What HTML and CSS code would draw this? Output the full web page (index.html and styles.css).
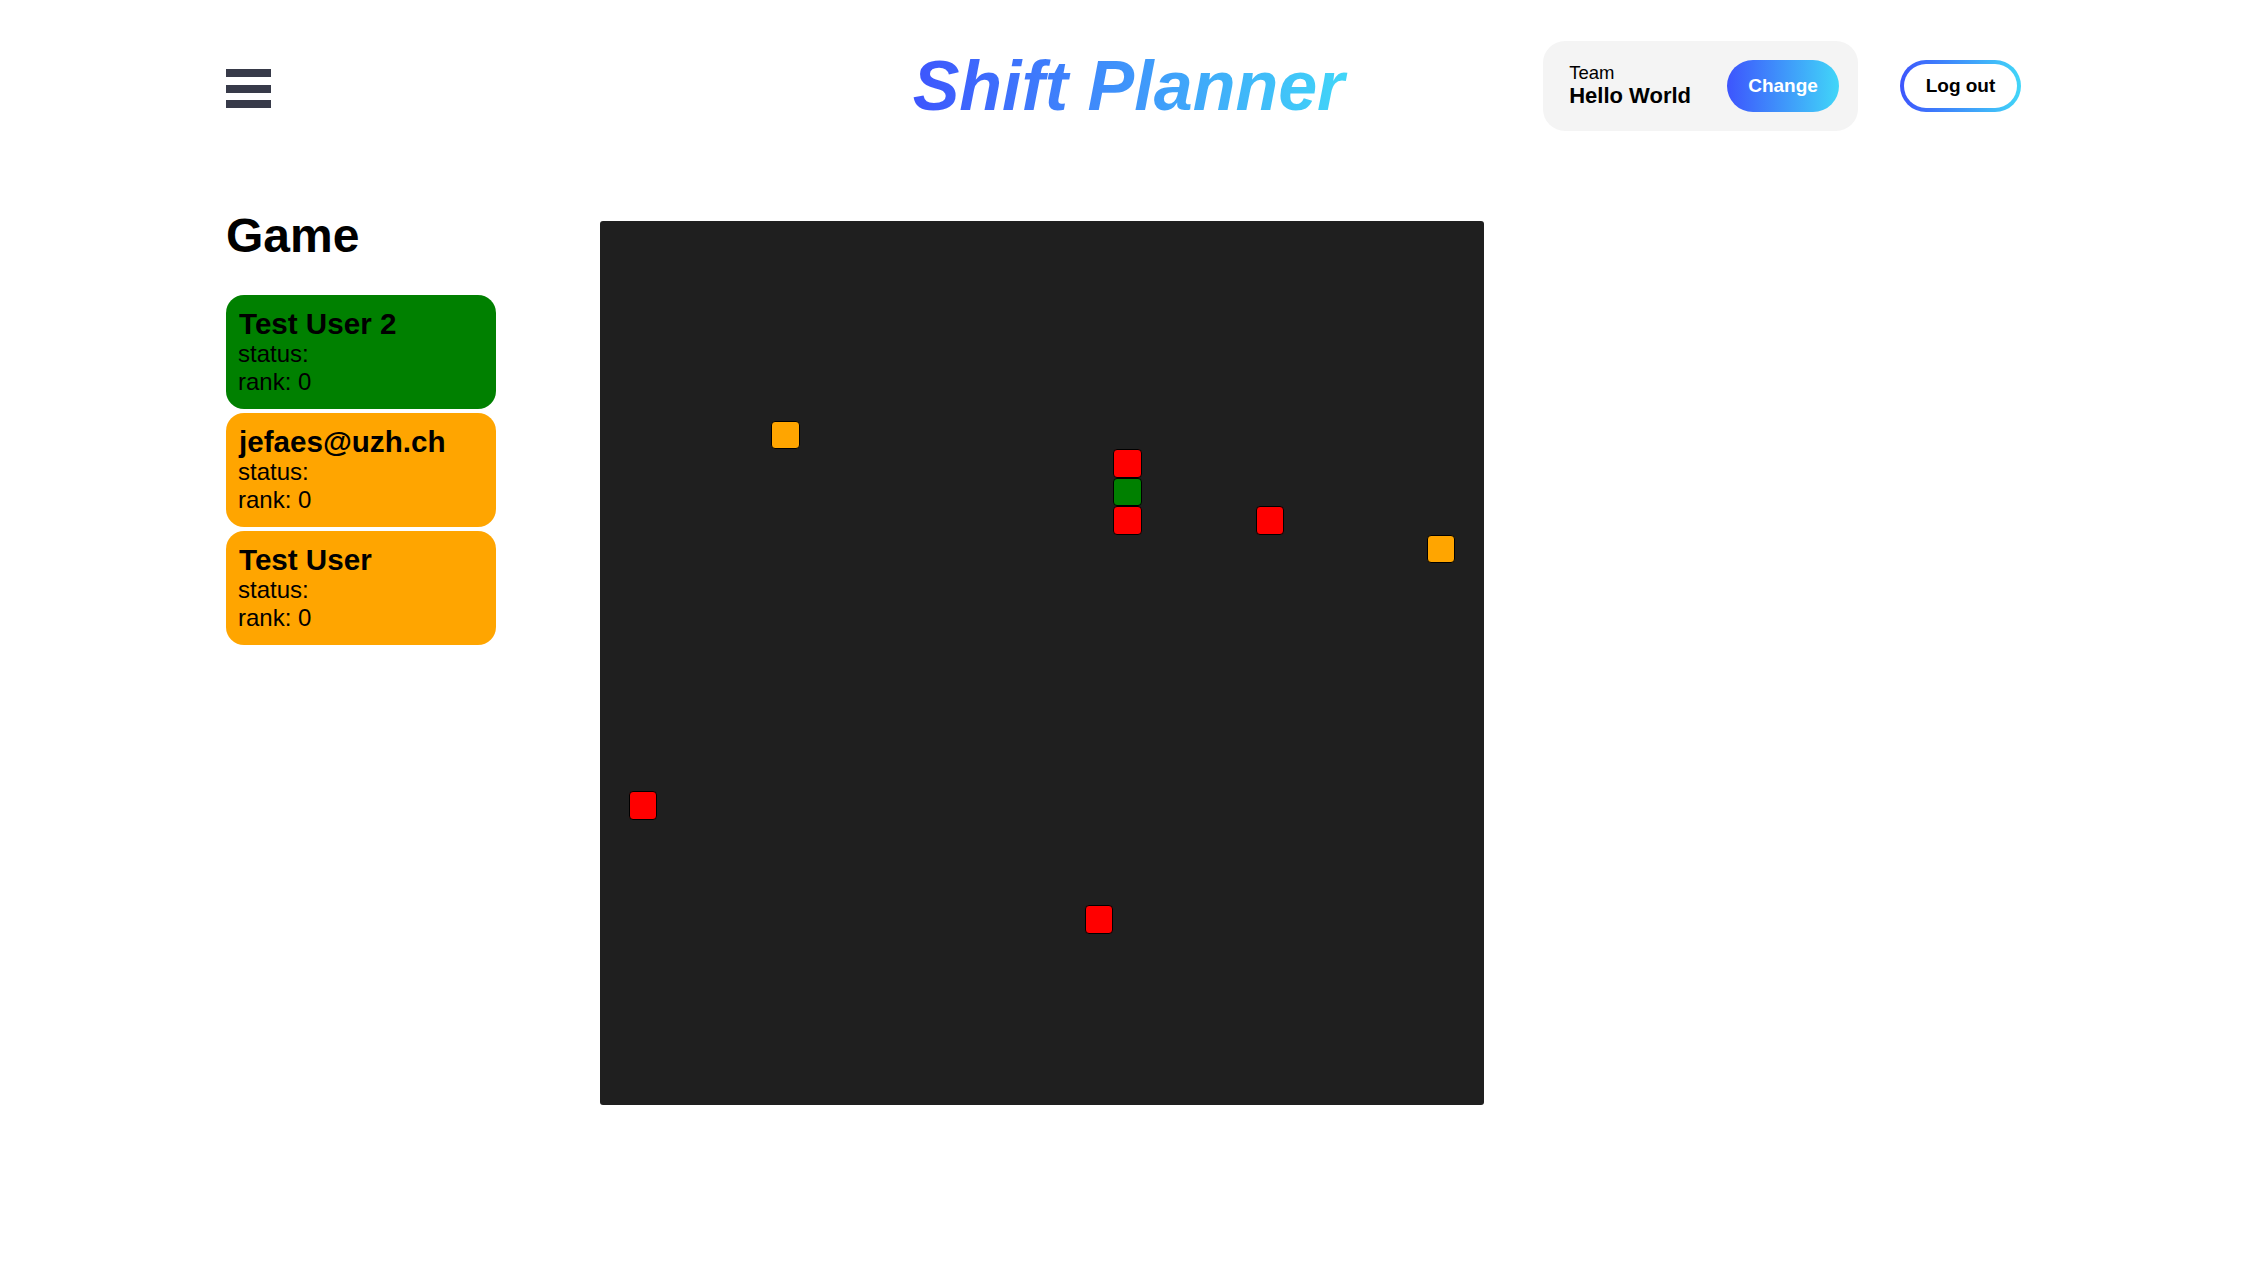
FILE: index.html
```html
<!DOCTYPE html>
<html lang="en">
<head>
<meta charset="utf-8">
<title>Shift Planner</title>
<link rel="stylesheet" href="styles.css">
</head>
<body>
<header class="topbar">
  <div class="left">
    <button class="burger" aria-label="Menu"><span></span><span></span><span></span></button>
  </div>
  <h1 class="brand"><span class="brand-text">Shift Planner</span></h1>
  <div class="right">
    <div class="team-box">
      <div class="team-info">
        <div class="team-label">Team</div>
        <div class="team-name">Hello World</div>
      </div>
      <button class="btn-change">Change</button>
    </div>
    <button class="btn-logout"><span>Log out</span></button>
  </div>
</header>
<main class="main">
  <aside class="sidebar">
    <h2 class="game-title">Game</h2>
    <div class="players">
      <div class="player player-green">
        <div class="player-name">Test User 2</div>
        <div class="player-line">status:</div>
        <div class="player-line">rank: 0</div>
      </div>
      <div class="player player-orange">
        <div class="player-name">jefaes@uzh.ch</div>
        <div class="player-line">status:</div>
        <div class="player-line">rank: 0</div>
      </div>
      <div class="player player-orange">
        <div class="player-name">Test User</div>
        <div class="player-line">status:</div>
        <div class="player-line">rank: 0</div>
      </div>
    </div>
  </aside>
  <section class="board">
    <div class="cell cell-orange" style="grid-column:7;grid-row:8"></div>
    <div class="cell cell-red" style="grid-column:19;grid-row:9"></div>
    <div class="cell cell-green" style="grid-column:19;grid-row:10"></div>
    <div class="cell cell-red" style="grid-column:19;grid-row:11"></div>
    <div class="cell cell-red" style="grid-column:24;grid-row:11"></div>
    <div class="cell cell-orange" style="grid-column:30;grid-row:12"></div>
    <div class="cell cell-red" style="grid-column:2;grid-row:21"></div>
    <div class="cell cell-red" style="grid-column:18;grid-row:25"></div>
  </section>
</main>
</body>
</html>
```
FILE: styles.css
```css
html, body {
  margin: 0;
  padding: 0;
  background: #ffffff;
}
body {
  font-family: "Liberation Sans", Arial, sans-serif;
  color: #000;
}
button {
  font-family: inherit;
  cursor: pointer;
}

.topbar {
  display: grid;
  grid-template-columns: 1fr auto 1fr;
  align-items: center;
  padding: 41px 235px 0 226px;
  height: 90px;
}
.left {
  display: flex;
  align-items: center;
}
.burger {
  display: flex;
  flex-direction: column;
  gap: 7.5px;
  padding: 0;
  margin-top: 5px;
  border: 0;
  background: transparent;
}
.burger span {
  display: block;
  width: 45px;
  height: 8px;
  background: #373a49;
}

.brand {
  margin: 0;
  padding-left: 14px;
  font-size: 70px;
  font-weight: 700;
  font-style: italic;
  line-height: 82px;
  text-align: center;
}
.brand-text {
  display: inline-block;
  background: linear-gradient(90deg, #3d55fd 0%, #41d6f8 100%);
  -webkit-background-clip: text;
  background-clip: text;
  color: transparent;
  padding-right: 4px;
}

.right {
  display: flex;
  align-items: center;
  justify-content: flex-end;
  gap: 42px;
}
.team-box {
  display: flex;
  align-items: center;
  gap: 36px;
  background: #f4f4f4;
  border-radius: 22px;
  padding: 19px 19px 19px 26px;
}
.team-label {
  font-size: 18.5px;
  line-height: 20px;
}
.team-name {
  font-size: 22px;
  font-weight: 700;
  line-height: 26px;
}
.btn-change {
  height: 52px;
  width: 112px;
  border: 0;
  border-radius: 26px;
  background: linear-gradient(90deg, #3d55fd 0%, #41d6f8 100%);
  color: #fff;
  font-size: 19px;
  font-weight: 700;
  padding: 0;
}
.btn-logout {
  height: 52px;
  width: 121px;
  padding: 4px;
  border: 0;
  border-radius: 26px;
  background: linear-gradient(90deg, #3d55fd 0%, #41d6f8 100%);
  display: flex;
}
.btn-logout span {
  flex: 1;
  display: flex;
  align-items: center;
  justify-content: center;
  background: #fff;
  border-radius: 22px;
  font-size: 19px;
  font-weight: 700;
  color: #000;
}

.main {
  display: flex;
  align-items: flex-start;
  gap: 104px;
  padding: 77px 0 0 226px;
}
.sidebar {
  width: 270px;
  flex: none;
}
.game-title {
  margin: 0 0 32px;
  font-size: 48px;
  font-weight: 700;
  line-height: 55px;
}
.players {
  display: flex;
  flex-direction: column;
  gap: 4px;
}
.player {
  border-radius: 18px;
  padding: 12px 12px 13px 12px;
}
.player-green { background: #008000; }
.player-orange { background: #ffa500; }
.player-name {
  font-size: 29.6px;
  font-weight: 700;
  line-height: 33px;
  padding-left: 1px;
}
.player-line {
  font-size: 24px;
  line-height: 28px;
}

.board {
  margin-top: 13px;
  width: 884px;
  height: 884px;
  flex: none;
  background: #1f1f1f;
  border-radius: 3px;
  display: grid;
  grid-template-columns: repeat(31, 1fr);
  grid-template-rows: repeat(31, 1fr);
}
.cell {
  box-sizing: border-box;
  border: 1px solid #000;
  border-radius: 4px;
}
.cell-red { background: #ff0000; }
.cell-green { background: #008000; }
.cell-orange { background: #ffa500; }
```
